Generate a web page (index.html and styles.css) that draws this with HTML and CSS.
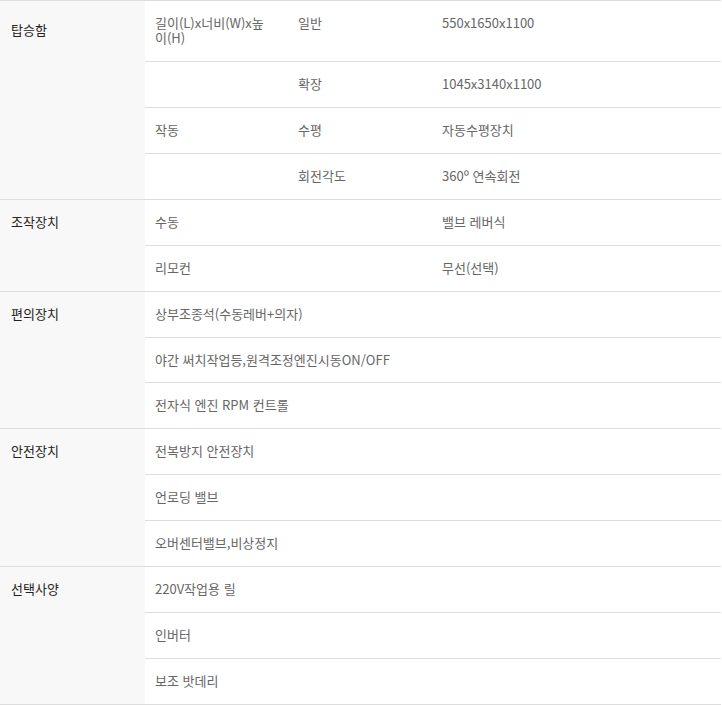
FILE: index.html
```html
<!DOCTYPE html>
<html lang="ko">
<head>
<meta charset="utf-8">
<link rel="stylesheet" href="styles.css">
</head>
<body>
<table class="spec">
  <colgroup>
    <col class="c1"><col class="c2"><col class="c3"><col class="c4">
  </colgroup>
  <tbody>
    <tr class="grp">
      <th rowspan="4" class="first">탑승함</th>
      <td class="narrow">길이(L)x너비(W)x높이(H)</td>
      <td>일반</td>
      <td>550x1650x1100</td>
    </tr>
    <tr>
      <td></td>
      <td>확장</td>
      <td>1045x3140x1100</td>
    </tr>
    <tr>
      <td>작동</td>
      <td>수평</td>
      <td>자동수평장치</td>
    </tr>
    <tr>
      <td></td>
      <td>회전각도</td>
      <td>360º 연속회전</td>
    </tr>
    <tr class="grp">
      <th rowspan="2">조작장치</th>
      <td colspan="2">수동</td>
      <td>밸브 레버식</td>
    </tr>
    <tr>
      <td colspan="2">리모컨</td>
      <td>무선(선택)</td>
    </tr>
    <tr class="grp">
      <th rowspan="3">편의장치</th>
      <td colspan="3">상부조종석(수동레버+의자)</td>
    </tr>
    <tr><td colspan="3">야간 써치작업등,원격조정엔진시동ON/OFF</td></tr>
    <tr><td colspan="3">전자식 엔진 RPM 컨트롤</td></tr>
    <tr class="grp">
      <th rowspan="3">안전장치</th>
      <td colspan="3">전복방지 안전장치</td>
    </tr>
    <tr><td colspan="3">언로딩 밸브</td></tr>
    <tr><td colspan="3">오버센터밸브,비상정지</td></tr>
    <tr class="grp">
      <th rowspan="3">선택사양</th>
      <td colspan="3">220V작업용 릴</td>
    </tr>
    <tr><td colspan="3">인버터</td></tr>
    <tr><td colspan="3">보조 밧데리</td></tr>
  </tbody>
</table>
</body>
</html>
```

FILE: styles.css
```css
html, body {
  margin: 0;
  padding: 0;
  background: #fff;
}
body {
  font-family: "Noto Sans CJK KR", "Malgun Gothic", sans-serif;
  font-size: 13px;
  color: #666;
}
.spec {
  width: 721px;
  border-collapse: collapse;
  table-layout: fixed;
  border-top: 1px solid #ddd;
}
.c1 { width: 145px; }
.c2 { width: 143px; }
.c3 { width: 144px; }
.c4 { width: auto; }
.spec th,
.spec td {
  padding: 15px 10px;
  line-height: 1.15;
  text-align: left;
  vertical-align: top;
  border-bottom: 1px solid #ddd;
  font-weight: normal;
}
.spec th {
  background: #f8f8f8;
  color: #222;
  padding-left: 11px;
}
.spec th.first {
  padding-top: 22px;
}
.spec td {
  padding-left: 10px;
}
.spec td.narrow {
  padding-right: 17px;
  word-break: break-all;
}
```
